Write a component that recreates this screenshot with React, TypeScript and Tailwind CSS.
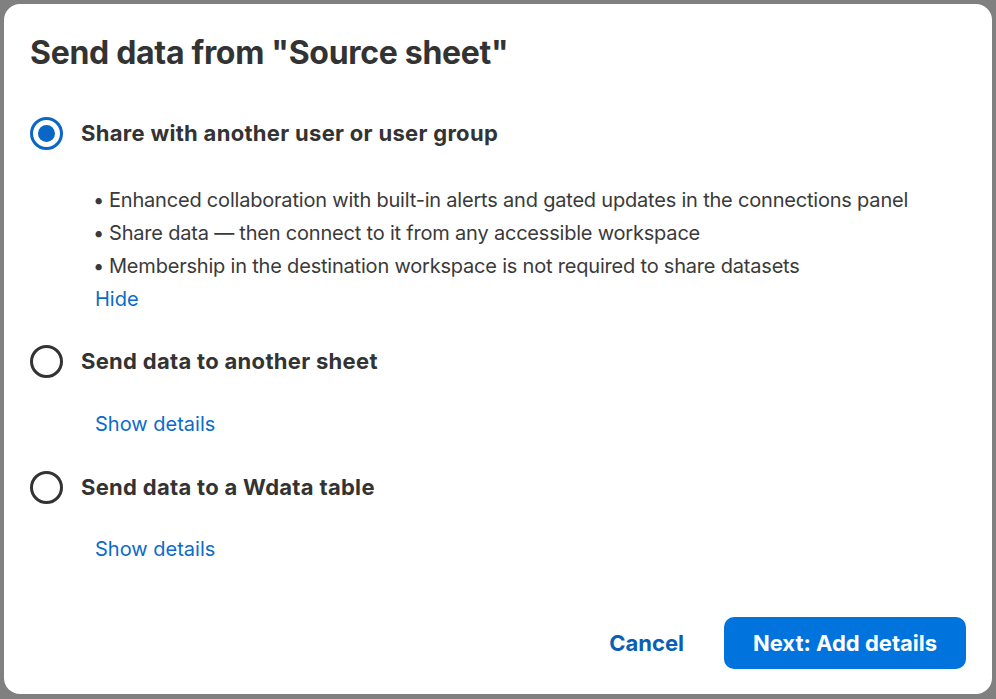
import React from 'react';

const font = { fontFamily: 'Inter, "Noto Sans", sans-serif' };

const Radio = ({ checked }: { checked?: boolean }) =>
  checked ? (
    <span className="flex h-[33px] w-[33px] shrink-0 items-center justify-center rounded-full border-[3px] border-[#0a66c7]">
      <span className="h-[17px] w-[17px] rounded-full bg-[#0a66c7]" />
    </span>
  ) : (
    <span className="h-[33px] w-[33px] shrink-0 rounded-full border-[3px] border-[#333333]" />
  );

const Option = ({
  label,
  checked,
  children,
}: {
  label: string;
  checked?: boolean;
  children: React.ReactNode;
}) => (
  <div>
    <div className="flex items-center gap-[18px]">
      <Radio checked={checked} />
      <span className="text-[22px] font-bold text-[#333333] tracking-[0.3px]">{label}</span>
    </div>
    <div className="pl-[66px]">{children}</div>
  </div>
);

const bullets = [
  'Enhanced collaboration with built-in alerts and gated updates in the connections panel',
  'Share data — then connect to it from any accessible workspace',
  'Membership in the destination workspace is not required to share datasets',
];

export default function App() {
  return (
    <div className="h-[699px] w-[996px] bg-[#808080] pt-[4px] pr-[4px] pb-[5px] pl-[4px]" style={font}>
      <div className="flex h-full flex-col rounded-[16px] bg-white px-[26px] pt-[27px]">
        <h1 className="text-[32px] font-bold leading-[44px] text-[#333333] tracking-[-0.3px]">
          Send data from "Source sheet"
        </h1>

        <div className="mt-[42px] flex flex-col">
          <Option label="Share with another user or user group" checked>
            <ul className="mt-[34px] text-[20px] leading-[33px] text-[#3a3a3a] tracking-[-0.2px]">
              {bullets.map((b) => (
                <li key={b} className="flex">
                  <span className="-ml-[3px] w-[16px] shrink-0">•</span>
                  <span>{b}</span>
                </li>
              ))}
            </ul>
            <button className="-ml-[1px] text-[20px] leading-[33px] text-[#0b6bcb]">Hide</button>
          </Option>

          <div className="mt-[29px]">
            <Option label="Send data to another sheet">
              <button className="-ml-[1px] mt-[30px] text-[20px] leading-[33px] text-[#0b6bcb]">Show details</button>
            </Option>
          </div>

          <div className="mt-[30px]">
            <Option label="Send data to a Wdata table">
              <button className="-ml-[1px] mt-[29px] text-[20px] leading-[33px] text-[#0b6bcb]">Show details</button>
            </Option>
          </div>
        </div>

        <div className="mt-auto mb-[25px] flex items-center justify-end gap-[40px]">
          <button className="text-[22px] font-bold text-[#0a5fb4]">Cancel</button>
          <button className="h-[52px] w-[242px] rounded-[10px] bg-[#0073dd] text-[22px] font-bold text-white">
            Next: Add details
          </button>
        </div>
      </div>
    </div>
  );
}
